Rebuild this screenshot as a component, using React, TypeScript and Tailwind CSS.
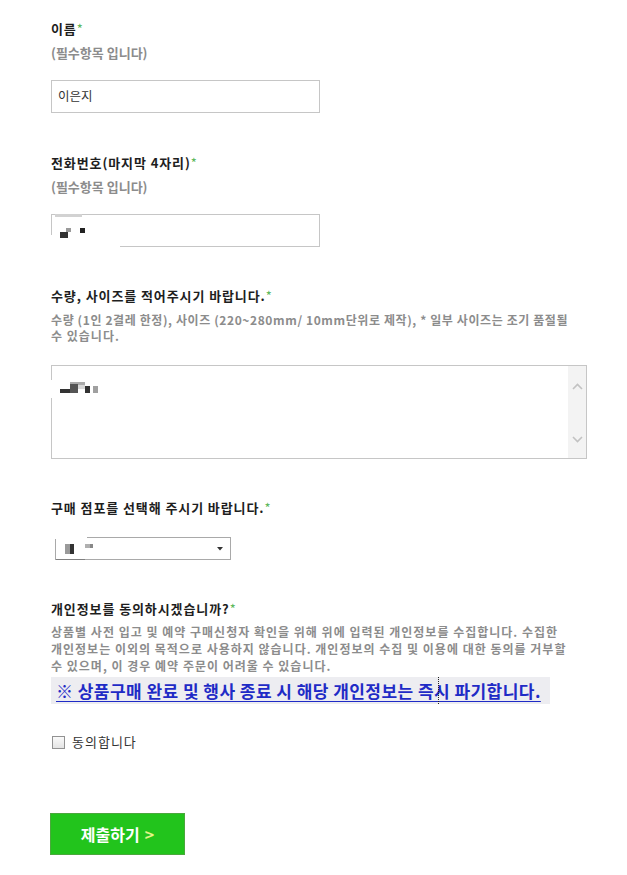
import React from "react";

function Label({ children }: { children: React.ReactNode }) {
  return (
    <div className="text-[13px] leading-[18px] font-bold text-[#1e1e1e] tracking-[0.9px] whitespace-nowrap">
      {children}
      <span className="text-[#5cb85c] font-normal tracking-normal">*</span>
    </div>
  );
}

function Required() {
  return (
    <div className="mt-[6px] text-[13px] leading-[18px] font-bold text-[#8c8c8c]">
      (필수항목 입니다)
    </div>
  );
}

function Block({ c }: { c: string }) {
  return <div className={c} />;
}

export default function App() {
  return (
    <div className="bg-white min-h-[875px] font-['Noto_Sans_CJK_KR','Noto_Sans',sans-serif]">
      <div className="ml-[51px] w-[536px] pt-[20px] pb-[20px]">
        {/* 이름 */}
        <Label>이름</Label>
        <Required />
        <div className="mt-[18px] w-[269px] h-[33px] border border-[#c6c6c6] flex items-center pl-[6px] text-[12.5px] text-[#333]">
          이은지
        </div>

        {/* 전화번호 */}
        <div className="mt-[41px]">
          <Label>전화번호(마지막 4자리)</Label>
        </div>
        <Required />
        <div className="relative mt-[18px] w-[269px] h-[33px] border border-[#c6c6c6]">
          <Block c="absolute left-[-1px] top-[20px] w-[69px] h-[13px] bg-white" />
          <Block c="absolute left-[3px] top-[-1px] w-[27px] h-[3px] bg-[#d2d2d2]" />
          <Block c="absolute left-[8px] top-[17px] w-[8px] h-[6px] bg-[#333]" />
          <Block c="absolute left-[14px] top-[13px] w-[5px] h-[4px] bg-[#9a9a9a]" />
          <Block c="absolute left-[28px] top-[13px] w-[5px] h-[5px] bg-[#222]" />
        </div>

        {/* 수량 */}
        <div className="mt-[40px]">
          <Label>수량, 사이즈를 적어주시기 바랍니다.</Label>
        </div>
        <div className="mt-[7px] text-[12px] leading-[16px] font-bold text-[#8c8c8c] whitespace-nowrap">
          <div className="tracking-[0.6px]">수량 (1인 2결레 한정), 사이즈 (220~280mm/ 10mm단위로 제작), * 일부 사이즈는 조기 품절될</div>
          <div className="tracking-[1px]">수 있습니다.</div>
        </div>
        <div className="relative mt-[21px] w-[536px] h-[94px] border border-[#c6c6c6] flex">
          <div className="flex-1" />
          <div className="w-[18px] h-full bg-[#f3f3f3] flex flex-col items-center justify-between pt-[17px] pb-[15px]">
            <svg width="11" height="7" viewBox="0 0 11 7">
              <polyline points="1,6 5.5,1.5 10,6" fill="none" stroke="#c2c2c2" strokeWidth="1.6" />
            </svg>
            <svg width="11" height="7" viewBox="0 0 11 7">
              <polyline points="1,1 5.5,5.5 10,1" fill="none" stroke="#c2c2c2" strokeWidth="1.6" />
            </svg>
          </div>
          <Block c="absolute left-[-1px] top-[14px] w-[3px] h-[18px] bg-white" />
          <Block c="absolute left-[18px] top-[16px] w-[15px] h-[3px] bg-[#ababab]" />
          <Block c="absolute left-[8px] top-[23px] w-[11px] h-[4px] bg-[#333]" />
          <Block c="absolute left-[18px] top-[18px] w-[8px] h-[9px] bg-[#555]" />
          <Block c="absolute left-[26px] top-[19px] w-[7px] h-[4px] bg-[#d8d8d8]" />
          <Block c="absolute left-[33px] top-[20px] w-[5px] h-[7px] bg-[#333]" />
          <Block c="absolute left-[41px] top-[20px] w-[5px] h-[7px] bg-[#a0a0a0]" />
        </div>

        {/* 구매 점포 */}
        <div className="mt-[40px]">
          <Label>구매 점포를 선택해 주시기 바랍니다.</Label>
        </div>
        <div className="relative mt-[20px] ml-[4px] w-[176px] h-[23px] border border-[#a9a9a9] flex items-center justify-end pr-[7px]">
          <svg width="6" height="4" viewBox="0 0 6 4">
            <polygon points="0,0 6,0 3,3.5" fill="#333" />
          </svg>
          <Block c="absolute left-[-1px] top-[-1px] w-[32px] h-[2px] bg-white" />
          <Block c="absolute left-[0px] bottom-[-1px] w-[29px] h-[1px] bg-[#808080]" />
          <Block c="absolute left-[9px] top-[6px] w-[5px] h-[10px] bg-[#9a9a9a]" />
          <Block c="absolute left-[14px] top-[6px] w-[4px] h-[10px] bg-[#333]" />
          <Block c="absolute left-[29px] top-[6px] w-[5px] h-[4px] bg-[#b0b0b0]" />
          <Block c="absolute left-[34px] top-[6px] w-[3px] h-[4px] bg-[#888]" />
        </div>

        {/* 개인정보 */}
        <div className="mt-[40px]">
          <Label>개인정보를 동의하시겠습니까?</Label>
        </div>
        <div className="mt-[5px] text-[12px] leading-[17px] font-bold text-[#8c8c8c] tracking-[1px] whitespace-nowrap">
          <div>상품별 사전 입고 및 예약 구매신청자 확인을 위해 위에 입력된 개인정보를 수집합니다. 수집한</div>
          <div>개인정보는 이외의 목적으로 사용하지 않습니다. 개인정보의 수집 및 이용에 대한 동의를 거부할</div>
          <div>수 있으며, 이 경우 예약 주문이 어려울 수 있습니다.</div>
        </div>
        <div className="relative mt-[3px] w-[499px] h-[27px] bg-[#ededf1] flex items-center pl-[5px]">
          <span className="text-[17px] leading-[20px] font-bold text-[#1f2bc6] tracking-[0.45px] underline underline-offset-[3px] whitespace-nowrap">
            ※ 상품구매 완료 및 행사 종료 시 해당 개인정보는 즉시 파기합니다.
          </span>
          <Block c="absolute left-[387px] top-0 h-full w-0 border-l border-dotted border-[#222]" />
        </div>

        <div className="mt-[31px] flex items-center h-[14px]">
          <div className="w-[13px] h-[13px] ml-[1px] border border-[#929292] bg-gradient-to-b from-[#fafafa] to-[#e4e4e4]" />
          <span className="ml-[7px] text-[13px] text-[#333] tracking-[1px] whitespace-nowrap">동의합니다</span>
        </div>

        <button className="mt-[64px] -ml-[1px] w-[135px] h-[42px] bg-[#22c41c] border border-[#4aa83c] flex items-center justify-center text-white text-[16px] font-bold">
          제출하기
          <span className="ml-[5px] text-[#e4f48a]">&gt;</span>
        </button>
      </div>
    </div>
  );
}
